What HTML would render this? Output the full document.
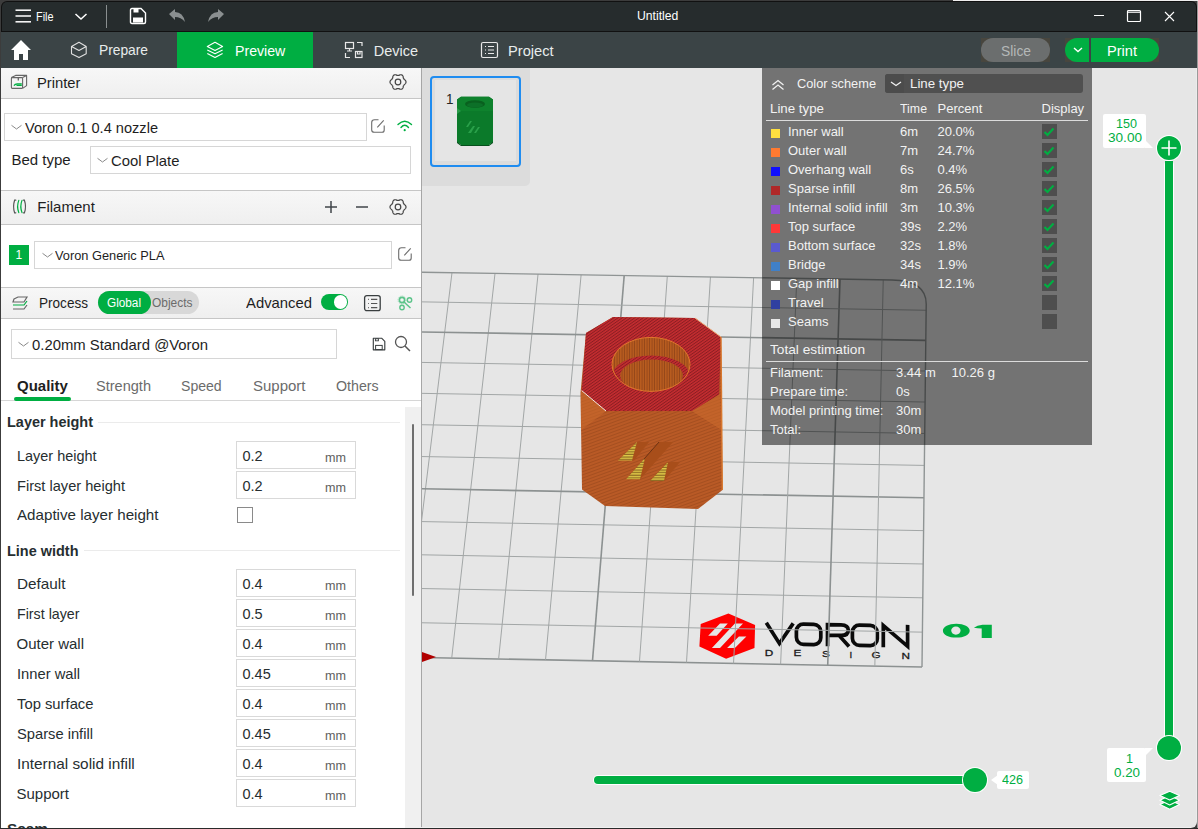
<!DOCTYPE html><html><head><meta charset="utf-8"><style>
html,body{margin:0;padding:0;width:1198px;height:829px;overflow:hidden;background:#3a3a3a}
body>div,body>svg{position:absolute}
.t{position:absolute;line-height:0;white-space:nowrap;font-family:"Liberation Sans",sans-serif}
</style></head><body>
<div style="left:0px;top:0px;width:1198px;height:829px;background:#3c3c3c"></div>
<div style="left:953px;top:0px;width:245px;height:1px;background:#eeeeee"></div>
<div style="left:1197px;top:1px;width:1px;height:828px;background:#9a9a9a"></div>
<div style="left:0px;top:828px;width:1198px;height:1px;background:#2a2a2a"></div>
<div style="left:1px;top:1px;width:1196px;height:827px;background:#111;border-radius:6px"></div>
<div style="left:2px;top:2px;width:1194px;height:29px;background:#262c2d;border-radius:5px 5px 0 0"></div>
<svg style="position:absolute;left:15px;top:9px;" width="17" height="14" viewBox="0 0 17 14"><g stroke="#f4f4f4" stroke-width="1.6"><line x1="0.5" y1="1.2" x2="16" y2="1.2"/><line x1="0.5" y1="7" x2="16" y2="7"/><line x1="0.5" y1="12.8" x2="16" y2="12.8"/></g></svg>
<div class="t" style="left:35.5px;top:16.50px;font-size:13px;color:#fff;transform:scaleX(0.8355);transform-origin:0 0;">File</div>
<svg style="position:absolute;left:74px;top:13px;" width="14" height="8" viewBox="0 0 14 8"><polyline points="1.5,1 7,6 12.5,1" fill="none" stroke="#fff" stroke-width="1.5"/></svg>
<div style="left:106px;top:5px;width:1px;height:23px;background:#8a8f90"></div>
<svg style="position:absolute;left:129px;top:7px;" width="18" height="18" viewBox="0 0 18 18"><path d="M2.5,1.5 H12 L16.5,6 V15 Q16.5,16.5 15,16.5 H3 Q1.5,16.5 1.5,15 V3 Q1.5,1.5 3,1.5 Z" fill="none" stroke="#fff" stroke-width="1.4"/><rect x="4.5" y="2" width="5" height="3.5" fill="#fff"/><rect x="4" y="10.5" width="10" height="5" fill="#fff"/></svg>
<svg style="position:absolute;left:168px;top:9px;" width="18" height="14" viewBox="0 0 18 14"><path d="M1,5 L7,0 V3 Q15,3 17,13 Q13,8 7,8 V11 Z" fill="#8a8f90"/></svg>
<svg style="position:absolute;left:207px;top:9px;" width="18" height="14" viewBox="0 0 18 14"><path d="M17,5 L11,0 V3 Q3,3 1,13 Q5,8 11,8 V11 Z" fill="#8a8f90"/></svg>
<div class="t" style="left:636.5px;top:16.37px;font-size:12.5px;color:#fff;transform:scaleX(0.9745);transform-origin:0 0;">Untitled</div>
<div style="left:1094px;top:15px;width:10px;height:1px;background:#fff"></div>
<svg style="position:absolute;left:1126px;top:9px;" width="16" height="14" viewBox="0 0 16 14"><rect x="1.5" y="1.5" width="13" height="11" rx="1" fill="none" stroke="#fff" stroke-width="1.2"/><line x1="1.5" y1="3.2" x2="14.5" y2="3.2" stroke="#fff" stroke-width="1.2"/></svg>
<svg style="position:absolute;left:1164px;top:11px;" width="12" height="12" viewBox="0 0 12 12"><path d="M1,1 L10,10 M10,1 L1,10" stroke="#fff" stroke-width="1.1"/></svg>
<div style="left:1px;top:32px;width:1196px;height:36px;background:#3b4446"></div>
<div style="left:177px;top:32px;width:136px;height:36px;background:#00ae42"></div>
<svg style="position:absolute;left:10px;top:39px;" width="22" height="22" viewBox="0 0 22 22"><path d="M11,1 L21,11 H18 V21 H13 V15 H9 V21 H4 V11 H1 Z" fill="#fff"/></svg>
<svg style="position:absolute;left:70px;top:41px;" width="18" height="18" viewBox="0 0 18 18"><path d="M9,1.3 L16.2,5.5 V12.7 L9,16.6 L1.5,12.7 V5.5 Z M1.5,5.5 L9,9.5 L16.2,5.5" fill="none" stroke="#e0e0e0" stroke-width="1.1" stroke-linejoin="round"/></svg>
<div class="t" style="left:99px;top:50.48px;font-size:14.5px;color:#e8ecec;transform:scaleX(0.9500);transform-origin:0 0;">Prepare</div>
<svg style="position:absolute;left:206px;top:41px;" width="18" height="18" viewBox="0 0 18 18"><g fill="none" stroke="#fff" stroke-width="1.1" stroke-linejoin="round"><path d="M9,1.3 L16.6,5.5 L9,9.5 L1.3,5.5 Z"/><path d="M1.3,9 L9,12.8 L16.6,9"/><path d="M1.3,12.5 L9,16.5 L16.6,12.5"/></g></svg>
<div class="t" style="left:234.5px;top:50.98px;font-size:14.5px;color:#fff;transform:scaleX(0.9754);transform-origin:0 0;">Preview</div>
<svg style="position:absolute;left:344px;top:41px;" width="20" height="18" viewBox="0 0 20 18"><g fill="none" stroke="#e8e8e8" stroke-width="1.2"><rect x="1.5" y="1.5" width="8" height="6"/><path d="M5.5,7.5 V10 M3,10 H8"/><path d="M13,1.5 H18 V5"/><path d="M1.5,12 V16.5 H6"/><rect x="11.5" y="10.5" width="6.5" height="6"/><path d="M13.5,10.5 V13 H16 V10.5"/></g></svg>
<div class="t" style="left:373.7px;top:50.98px;font-size:14.5px;color:#e8ecec;">Device</div>
<svg style="position:absolute;left:480px;top:41px;" width="19" height="18" viewBox="0 0 19 18"><g fill="none" stroke="#e8e8e8" stroke-width="1.2"><rect x="1.5" y="1.5" width="16" height="15" rx="1.5"/><path d="M5,5.5 H6 M5,9 H6 M5,12.5 H6 M8,5.5 H14 M8,9 H14 M8,12.5 H14"/></g></svg>
<div class="t" style="left:508.4px;top:50.98px;font-size:14.5px;color:#e8ecec;transform:scaleX(1.0105);transform-origin:0 0;">Project</div>
<div style="left:981px;top:38px;width:69px;height:24px;background:#48463e"></div>
<div style="left:981px;top:38px;width:69px;height:24px;background:#6b6e6e;border-radius:12px"></div>
<div class="t" style="left:1000.5px;top:51.15px;font-size:14px;color:#b4b8b8;transform:scaleX(0.9886);transform-origin:0 0;">Slice</div>
<div style="left:1065px;top:38px;width:94px;height:24px;background:#48463e"></div>
<div style="left:1065px;top:38px;width:94px;height:24px;background:#00ae42;border-radius:12px"></div>
<div style="left:1089px;top:38px;width:2px;height:24px;background:#3b4446"></div>
<svg style="position:absolute;left:1072px;top:46px;" width="12" height="8" viewBox="0 0 12 8"><polyline points="2,2 6,5.5 10,2" fill="none" stroke="#fff" stroke-width="1.4"/></svg>
<div class="t" style="left:1107px;top:51.15px;font-size:14px;color:#fff;transform:scaleX(1.0422);transform-origin:0 0;">Print</div>
<div style="left:1px;top:68px;width:420px;height:760px;background:#fff"></div>
<div style="left:421px;top:68px;width:1px;height:760px;background:#a6a6a6"></div>
<div style="left:1px;top:68px;width:420px;height:30px;background:linear-gradient(#f7f7f7,#efefef)"></div>
<div style="left:1px;top:98px;width:420px;height:1px;background:#c6c6c6"></div>
<svg style="position:absolute;left:10px;top:73px;" width="19" height="18" viewBox="0 0 19 18"><g fill="none" stroke="#666" stroke-width="1.1" stroke-linejoin="round"><rect x="1.4" y="4.6" width="11.2" height="10.8" rx="0.8"/><path d="M1.4,4.6 L5.6,2.4 H16.6 V12.6 L12.6,15.4 M12.6,4.6 L16.6,2.4"/><path d="M8.3,4.6 V7.6" stroke-width="1.3"/></g><path d="M4,12.6 Q5,11 7.2,10.9 H11.8 M6.5,12.4 H11.8" fill="none" stroke="#00ae42" stroke-width="1.3"/></svg>
<div class="t" style="left:37px;top:82.80px;font-size:15px;color:#1e1e1e;transform:scaleX(0.9847);transform-origin:0 0;">Printer</div>
<svg style="position:absolute;left:388px;top:72px" width="20" height="20" viewBox="388 72 20 20"><path d="M406.00,82.00 L405.96,82.42 L405.85,82.83 L405.68,83.22 L405.43,83.58 L405.12,83.91 L404.73,84.19 L404.25,84.40 L404.12,84.73 L403.97,85.04 L403.80,85.35 L403.62,85.65 L403.42,85.94 L403.21,86.22 L403.26,86.74 L403.21,87.21 L403.08,87.65 L402.89,88.04 L402.64,88.39 L402.34,88.69 L402.00,88.93 L401.62,89.11 L401.21,89.22 L400.79,89.26 L400.35,89.23 L399.91,89.12 L399.47,88.92 L399.05,88.62 L398.70,88.66 L398.35,88.69 L398.00,88.70 L397.65,88.69 L397.30,88.66 L396.95,88.62 L396.53,88.92 L396.09,89.12 L395.65,89.23 L395.21,89.26 L394.79,89.22 L394.38,89.11 L394.00,88.93 L393.66,88.69 L393.36,88.39 L393.11,88.04 L392.92,87.65 L392.79,87.21 L392.74,86.74 L392.79,86.22 L392.58,85.94 L392.38,85.65 L392.20,85.35 L392.03,85.04 L391.88,84.73 L391.75,84.40 L391.27,84.19 L390.88,83.91 L390.57,83.58 L390.32,83.22 L390.15,82.83 L390.04,82.42 L390.00,82.00 L390.04,81.58 L390.15,81.17 L390.32,80.78 L390.57,80.42 L390.88,80.09 L391.27,79.81 L391.75,79.60 L391.88,79.27 L392.03,78.96 L392.20,78.65 L392.38,78.35 L392.58,78.06 L392.79,77.78 L392.74,77.26 L392.79,76.79 L392.92,76.35 L393.11,75.96 L393.36,75.61 L393.66,75.31 L394.00,75.07 L394.38,74.89 L394.79,74.78 L395.21,74.74 L395.65,74.77 L396.09,74.88 L396.53,75.08 L396.95,75.38 L397.30,75.34 L397.65,75.31 L398.00,75.30 L398.35,75.31 L398.70,75.34 L399.05,75.38 L399.47,75.08 L399.91,74.88 L400.35,74.77 L400.79,74.74 L401.21,74.78 L401.62,74.89 L402.00,75.07 L402.34,75.31 L402.64,75.61 L402.89,75.96 L403.08,76.35 L403.21,76.79 L403.26,77.26 L403.21,77.78 L403.42,78.06 L403.62,78.35 L403.80,78.65 L403.97,78.96 L404.12,79.27 L404.25,79.60 L404.73,79.81 L405.12,80.09 L405.43,80.42 L405.68,80.78 L405.85,81.17 L405.96,81.58 L406.00,82.00 Z" fill="none" stroke="#444" stroke-width="1.2"/><circle cx="398" cy="82" r="2.8" fill="none" stroke="#444" stroke-width="1.2"/></svg>
<div style="left:4px;top:113px;width:363px;height:28px;border:1px solid #d6d6d6;box-sizing:border-box;background:#fff"></div>
<svg style="position:absolute;left:10px;top:123px;" width="14" height="9" viewBox="0 0 14 9"><polyline points="1.5,2.3 6.5,6 11.5,2.3" fill="none" stroke="#8a8a8a" stroke-width="1"/></svg>
<div class="t" style="left:25.4px;top:127.80px;font-size:15px;color:#1e1e1e;transform:scaleX(0.9725);transform-origin:0 0;">Voron 0.1 0.4 nozzle</div>
<svg style="position:absolute;left:370px;top:118px;" width="16" height="16" viewBox="0 0 16 16"><path d="M8.5,1.7 H4.5 Q1.7,1.7 1.7,4.5 V11.9 Q1.7,14.2 4.5,14.2 H12 Q14.2,14.2 14.2,11.9 V7.5" fill="none" stroke="#6b6b6b" stroke-width="1.1"/><path d="M7.3,9.4 L13.7,2.4" stroke="#6b6b6b" stroke-width="1.1"/></svg>
<svg style="position:absolute;left:396px;top:118px;" width="18" height="16" viewBox="0 0 18 16"><g fill="none" stroke="#00ae42" stroke-width="1.4" stroke-linecap="round"><path d="M2,6.6 Q8.7,-0.2 15.5,6.6"/><path d="M5,9.5 Q8.7,5.1 12.5,9.5"/></g><circle cx="8.7" cy="12.2" r="1.1" fill="#00ae42"/></svg>
<div class="t" style="left:11.4px;top:159.80px;font-size:15px;color:#1e1e1e;">Bed type</div>
<div style="left:90px;top:146px;width:321px;height:28px;border:1px solid #d6d6d6;box-sizing:border-box;background:#fff"></div>
<svg style="position:absolute;left:96px;top:156px;" width="14" height="9" viewBox="0 0 14 9"><polyline points="1.5,2.3 6.5,6 11.5,2.3" fill="none" stroke="#8a8a8a" stroke-width="1"/></svg>
<div class="t" style="left:111.3px;top:160.80px;font-size:15px;color:#1e1e1e;transform:scaleX(0.9898);transform-origin:0 0;">Cool Plate</div>
<div style="left:1px;top:190px;width:420px;height:1px;background:#c6c6c6"></div>
<div style="left:1px;top:191px;width:420px;height:33px;background:linear-gradient(#f7f7f7,#efefef)"></div>
<div style="left:1px;top:224px;width:420px;height:1px;background:#c6c6c6"></div>
<svg style="position:absolute;left:10px;top:198px;" width="20" height="18" viewBox="0 0 20 18"><g fill="none" stroke-width="1.2" stroke-linecap="round"><path d="M5.8,2.2 H4.6 Q2.6,8.5 4.6,14.8 H5.8" stroke="#555"/><path d="M8.8,2.4 Q6.4,8.5 8.8,14.6" stroke="#00ae42"/><path d="M12,2.4 Q9.6,8.5 12,14.6" stroke="#00ae42"/><path d="M13.4,2.2 H14.4 Q16.6,8.5 14.4,14.8 H13.4" stroke="#555"/></g></svg>
<div class="t" style="left:37.3px;top:207.30px;font-size:15px;color:#1e1e1e;">Filament</div>
<svg style="position:absolute;left:322px;top:198px;" width="18" height="18" viewBox="0 0 18 18"><path d="M9,3 V15 M3,9 H15" stroke="#40454a" stroke-width="1.5"/></svg>
<svg style="position:absolute;left:353px;top:198px;" width="18" height="18" viewBox="0 0 18 18"><path d="M3,9 H15" stroke="#40454a" stroke-width="1.5"/></svg>
<svg style="position:absolute;left:388px;top:197px" width="20" height="20" viewBox="388 197 20 20"><path d="M406.00,207.00 L405.96,207.42 L405.85,207.83 L405.68,208.22 L405.43,208.58 L405.12,208.91 L404.73,209.19 L404.25,209.40 L404.12,209.73 L403.97,210.04 L403.80,210.35 L403.62,210.65 L403.42,210.94 L403.21,211.22 L403.26,211.74 L403.21,212.21 L403.08,212.65 L402.89,213.04 L402.64,213.39 L402.34,213.69 L402.00,213.93 L401.62,214.11 L401.21,214.22 L400.79,214.26 L400.35,214.23 L399.91,214.12 L399.47,213.92 L399.05,213.62 L398.70,213.66 L398.35,213.69 L398.00,213.70 L397.65,213.69 L397.30,213.66 L396.95,213.62 L396.53,213.92 L396.09,214.12 L395.65,214.23 L395.21,214.26 L394.79,214.22 L394.38,214.11 L394.00,213.93 L393.66,213.69 L393.36,213.39 L393.11,213.04 L392.92,212.65 L392.79,212.21 L392.74,211.74 L392.79,211.22 L392.58,210.94 L392.38,210.65 L392.20,210.35 L392.03,210.04 L391.88,209.73 L391.75,209.40 L391.27,209.19 L390.88,208.91 L390.57,208.58 L390.32,208.22 L390.15,207.83 L390.04,207.42 L390.00,207.00 L390.04,206.58 L390.15,206.17 L390.32,205.78 L390.57,205.42 L390.88,205.09 L391.27,204.81 L391.75,204.60 L391.88,204.27 L392.03,203.96 L392.20,203.65 L392.38,203.35 L392.58,203.06 L392.79,202.78 L392.74,202.26 L392.79,201.79 L392.92,201.35 L393.11,200.96 L393.36,200.61 L393.66,200.31 L394.00,200.07 L394.38,199.89 L394.79,199.78 L395.21,199.74 L395.65,199.77 L396.09,199.88 L396.53,200.08 L396.95,200.38 L397.30,200.34 L397.65,200.31 L398.00,200.30 L398.35,200.31 L398.70,200.34 L399.05,200.38 L399.47,200.08 L399.91,199.88 L400.35,199.77 L400.79,199.74 L401.21,199.78 L401.62,199.89 L402.00,200.07 L402.34,200.31 L402.64,200.61 L402.89,200.96 L403.08,201.35 L403.21,201.79 L403.26,202.26 L403.21,202.78 L403.42,203.06 L403.62,203.35 L403.80,203.65 L403.97,203.96 L404.12,204.27 L404.25,204.60 L404.73,204.81 L405.12,205.09 L405.43,205.42 L405.68,205.78 L405.85,206.17 L405.96,206.58 L406.00,207.00 Z" fill="none" stroke="#444" stroke-width="1.2"/><circle cx="398" cy="207" r="2.8" fill="none" stroke="#444" stroke-width="1.2"/></svg>
<div style="left:9px;top:245px;width:20px;height:20px;background:#00ae42"></div>
<div class="t" style="left:15.5px;top:255.34px;font-size:12px;color:#fff;">1</div>
<div style="left:34px;top:241px;width:358px;height:28px;border:1px solid #d6d6d6;box-sizing:border-box;background:#fff"></div>
<svg style="position:absolute;left:41px;top:251px;" width="14" height="9" viewBox="0 0 14 9"><polyline points="1.5,2.3 6.5,6 11.5,2.3" fill="none" stroke="#8a8a8a" stroke-width="1"/></svg>
<div class="t" style="left:55.2px;top:256.17px;font-size:12.5px;color:#1e1e1e;transform:scaleX(1.0233);transform-origin:0 0;">Voron Generic PLA</div>
<svg style="position:absolute;left:397px;top:246px;" width="16" height="16" viewBox="0 0 16 16"><path d="M8.5,1.7 H4.5 Q1.7,1.7 1.7,4.5 V11.9 Q1.7,14.2 4.5,14.2 H12 Q14.2,14.2 14.2,11.9 V7.5" fill="none" stroke="#6b6b6b" stroke-width="1.1"/><path d="M7.3,9.4 L13.7,2.4" stroke="#6b6b6b" stroke-width="1.1"/></svg>
<div style="left:1px;top:287px;width:420px;height:1px;background:#c6c6c6"></div>
<div style="left:1px;top:288px;width:420px;height:30px;background:linear-gradient(#f7f7f7,#efefef)"></div>
<div style="left:1px;top:318px;width:420px;height:1px;background:#c6c6c6"></div>
<svg style="position:absolute;left:11px;top:295.5px;" width="18" height="16" viewBox="0 0 18 16"><g fill="none" stroke-width="1.2"><path d="M3,3 L7,1 H16 L13,6 H2 Z" stroke="#666"/><path d="M2,9 H13 L16,5" stroke="#00ae42"/><path d="M2,13 H13 L16,9" stroke="#666"/></g></svg>
<div class="t" style="left:39.4px;top:302.80px;font-size:15px;color:#1e1e1e;transform:scaleX(0.9043);transform-origin:0 0;">Process</div>
<div style="left:98px;top:291px;width:101px;height:23px;background:#d8d8d8;border-radius:11.5px"></div>
<div style="left:98px;top:291px;width:53px;height:23px;background:#00ae42;border-radius:11.5px"></div>
<div class="t" style="left:107px;top:302.67px;font-size:12.5px;color:#fff;transform:scaleX(0.9410);transform-origin:0 0;">Global</div>
<div class="t" style="left:152px;top:302.67px;font-size:12.5px;color:#6b6b6b;transform:scaleX(0.9558);transform-origin:0 0;">Objects</div>
<div class="t" style="left:246px;top:302.80px;font-size:15px;color:#1e1e1e;transform:scaleX(0.9893);transform-origin:0 0;">Advanced</div>
<div style="left:321px;top:294.2px;width:27px;height:15.6px;background:#00ae42;border-radius:8px"></div>
<div style="left:334px;top:295.3px;width:13.4px;height:13.4px;border-radius:7px;background:#fff"></div>
<svg style="position:absolute;left:363px;top:294px;" width="19" height="18" viewBox="0 0 19 18"><rect x="1.6" y="1.6" width="15.6" height="15" rx="2.2" fill="none" stroke="#3a3f40" stroke-width="1.3"/><path d="M5,5.4 H5.8 M5,9.5 H5.8 M5,13.6 H5.8 M8,5.4 H14.3 M8,9.5 H14.3 M8,13.6 H14.3" stroke="#555" stroke-width="1.2"/></svg>
<svg style="position:absolute;left:396px;top:293px;" width="18" height="18" viewBox="0 0 18 18"><g fill="none" stroke="#5cc48a"><circle cx="6" cy="7" r="2.6" stroke-width="1.6"/><circle cx="6" cy="7" r="4" stroke-width="0.6" stroke-dasharray="1,1"/><circle cx="13.5" cy="7" r="2.2" stroke-width="1.4"/><circle cx="6" cy="14.5" r="2.2" stroke-width="1.4"/><path d="M8,9 L14.5,15" stroke-width="1.5"/></g></svg>
<div style="left:11px;top:329px;width:326px;height:30px;border:1px solid #d6d6d6;box-sizing:border-box;background:#fff"></div>
<svg style="position:absolute;left:17px;top:340px;" width="14" height="9" viewBox="0 0 14 9"><polyline points="1.5,2.3 6.5,6 11.5,2.3" fill="none" stroke="#8a8a8a" stroke-width="1"/></svg>
<div class="t" style="left:32px;top:345.30px;font-size:15px;color:#1e1e1e;transform:scaleX(0.9898);transform-origin:0 0;">0.20mm Standard @Voron</div>
<svg style="position:absolute;left:372px;top:337px;" width="15" height="15" viewBox="0 0 15 15"><path d="M1.3,1.2 H9.6 L12.8,4.4 V12.8 H1.3 Z" fill="none" stroke="#3a3f40" stroke-width="1.15" stroke-linejoin="round"/><rect x="3.4" y="1.8" width="3" height="2" fill="none" stroke="#3a3f40" stroke-width="0.9"/><rect x="3.6" y="8.4" width="6.6" height="4.2" fill="none" stroke="#3a3f40" stroke-width="1"/></svg>
<svg style="position:absolute;left:394px;top:335px;" width="18" height="18" viewBox="0 0 18 18"><circle cx="7" cy="7" r="5.5" fill="none" stroke="#555" stroke-width="1.3"/><path d="M11,11 L16,16" stroke="#555" stroke-width="1.5"/></svg>
<div class="t" style="left:17px;top:385.80px;font-size:15px;color:#1e1e1e;font-weight:bold;">Quality</div>
<div class="t" style="left:96.4px;top:385.80px;font-size:15px;color:#6b6b6b;transform:scaleX(0.9700);transform-origin:0 0;">Strength</div>
<div style="left:1px;top:400px;width:420px;height:1px;background:#d6d6d6"></div>
<div style="left:14px;top:397px;width:57px;height:4px;background:#00ae42;border-radius:2px"></div>
<div class="t" style="left:181.2px;top:385.80px;font-size:15px;color:#6b6b6b;transform:scaleX(0.9384);transform-origin:0 0;">Speed</div>
<div class="t" style="left:253px;top:385.80px;font-size:15px;color:#6b6b6b;">Support</div>
<div class="t" style="left:335.8px;top:385.80px;font-size:15px;color:#6b6b6b;transform:scaleX(0.9486);transform-origin:0 0;">Others</div>
<div style="left:405px;top:407px;width:16px;height:421px;background:#f0f0f0"></div>
<div style="left:412px;top:424px;width:2px;height:172px;background:#6f6f6f;border-radius:1px"></div>
<div class="t" style="left:7px;top:422.00px;font-size:15px;color:#262e30;font-weight:bold;transform:scaleX(0.9643);transform-origin:0 0;">Layer height</div>
<div style="left:98px;top:422px;width:302px;height:1px;background:#ebebeb"></div>
<div class="t" style="left:16.5px;top:455.50px;font-size:15px;color:#262e30;transform:scaleX(0.9630);transform-origin:0 0;">Layer height</div>
<div style="left:236px;top:441px;width:120px;height:28px;border:1px solid #d9d9d9;box-sizing:border-box;background:#fff"></div>
<div class="t" style="left:242.5px;top:455.68px;font-size:14.5px;color:#262e30;">0.2</div>
<div class="t" style="left:324.6px;top:458.04px;font-size:12px;color:#5e5e5e;transform:scaleX(1.0505);transform-origin:0 0;">mm</div>
<div class="t" style="left:16.5px;top:485.50px;font-size:15px;color:#262e30;transform:scaleX(0.9741);transform-origin:0 0;">First layer height</div>
<div style="left:236px;top:471px;width:120px;height:28px;border:1px solid #d9d9d9;box-sizing:border-box;background:#fff"></div>
<div class="t" style="left:242.5px;top:485.68px;font-size:14.5px;color:#262e30;">0.2</div>
<div class="t" style="left:324.6px;top:488.04px;font-size:12px;color:#5e5e5e;transform:scaleX(1.0505);transform-origin:0 0;">mm</div>
<div class="t" style="left:16.5px;top:515.30px;font-size:15px;color:#262e30;transform:scaleX(1.0101);transform-origin:0 0;">Adaptive layer height</div>
<div style="left:237px;top:507px;width:16px;height:16px;border:1px solid #8a8a8a;box-sizing:border-box;background:#fff"></div>
<div class="t" style="left:7px;top:550.80px;font-size:15px;color:#262e30;font-weight:bold;transform:scaleX(0.9642);transform-origin:0 0;">Line width</div>
<div style="left:84px;top:550px;width:316px;height:1px;background:#ebebeb"></div>
<div class="t" style="left:16.5px;top:583.80px;font-size:15px;color:#262e30;transform:scaleX(1.0205);transform-origin:0 0;">Default</div>
<div style="left:236px;top:569px;width:120px;height:28px;border:1px solid #d9d9d9;box-sizing:border-box;background:#fff"></div>
<div class="t" style="left:242.5px;top:583.98px;font-size:14.5px;color:#262e30;">0.4</div>
<div class="t" style="left:324.6px;top:586.34px;font-size:12px;color:#5e5e5e;transform:scaleX(1.0505);transform-origin:0 0;">mm</div>
<div class="t" style="left:16.5px;top:613.80px;font-size:15px;color:#262e30;transform:scaleX(0.9494);transform-origin:0 0;">First layer</div>
<div style="left:236px;top:599px;width:120px;height:28px;border:1px solid #d9d9d9;box-sizing:border-box;background:#fff"></div>
<div class="t" style="left:242.5px;top:613.98px;font-size:14.5px;color:#262e30;">0.5</div>
<div class="t" style="left:324.6px;top:616.34px;font-size:12px;color:#5e5e5e;transform:scaleX(1.0505);transform-origin:0 0;">mm</div>
<div class="t" style="left:16.5px;top:643.80px;font-size:15px;color:#262e30;">Outer wall</div>
<div style="left:236px;top:629px;width:120px;height:28px;border:1px solid #d9d9d9;box-sizing:border-box;background:#fff"></div>
<div class="t" style="left:242.5px;top:643.98px;font-size:14.5px;color:#262e30;">0.4</div>
<div class="t" style="left:324.6px;top:646.34px;font-size:12px;color:#5e5e5e;transform:scaleX(1.0505);transform-origin:0 0;">mm</div>
<div class="t" style="left:16.5px;top:673.80px;font-size:15px;color:#262e30;transform:scaleX(0.9814);transform-origin:0 0;">Inner wall</div>
<div style="left:236px;top:659px;width:120px;height:28px;border:1px solid #d9d9d9;box-sizing:border-box;background:#fff"></div>
<div class="t" style="left:242.5px;top:673.98px;font-size:14.5px;color:#262e30;">0.45</div>
<div class="t" style="left:324.6px;top:676.34px;font-size:12px;color:#5e5e5e;transform:scaleX(1.0505);transform-origin:0 0;">mm</div>
<div class="t" style="left:16.5px;top:703.80px;font-size:15px;color:#262e30;transform:scaleX(0.9866);transform-origin:0 0;">Top surface</div>
<div style="left:236px;top:689px;width:120px;height:28px;border:1px solid #d9d9d9;box-sizing:border-box;background:#fff"></div>
<div class="t" style="left:242.5px;top:703.98px;font-size:14.5px;color:#262e30;">0.4</div>
<div class="t" style="left:324.6px;top:706.34px;font-size:12px;color:#5e5e5e;transform:scaleX(1.0505);transform-origin:0 0;">mm</div>
<div class="t" style="left:16.5px;top:733.80px;font-size:15px;color:#262e30;transform:scaleX(0.9802);transform-origin:0 0;">Sparse infill</div>
<div style="left:236px;top:719px;width:120px;height:28px;border:1px solid #d9d9d9;box-sizing:border-box;background:#fff"></div>
<div class="t" style="left:242.5px;top:733.98px;font-size:14.5px;color:#262e30;">0.45</div>
<div class="t" style="left:324.6px;top:736.34px;font-size:12px;color:#5e5e5e;transform:scaleX(1.0505);transform-origin:0 0;">mm</div>
<div class="t" style="left:16.5px;top:763.80px;font-size:15px;color:#262e30;transform:scaleX(1.0230);transform-origin:0 0;">Internal solid infill</div>
<div style="left:236px;top:749px;width:120px;height:28px;border:1px solid #d9d9d9;box-sizing:border-box;background:#fff"></div>
<div class="t" style="left:242.5px;top:763.98px;font-size:14.5px;color:#262e30;">0.4</div>
<div class="t" style="left:324.6px;top:766.34px;font-size:12px;color:#5e5e5e;transform:scaleX(1.0505);transform-origin:0 0;">mm</div>
<div class="t" style="left:16.5px;top:793.80px;font-size:15px;color:#262e30;">Support</div>
<div style="left:236px;top:779px;width:120px;height:28px;border:1px solid #d9d9d9;box-sizing:border-box;background:#fff"></div>
<div class="t" style="left:242.5px;top:793.98px;font-size:14.5px;color:#262e30;">0.4</div>
<div class="t" style="left:324.6px;top:796.34px;font-size:12px;color:#5e5e5e;transform:scaleX(1.0505);transform-origin:0 0;">mm</div>
<div class="t" style="left:7px;top:828.80px;font-size:15px;color:#262e30;font-weight:bold;transform:scaleX(1.0243);transform-origin:0 0;">Seam</div>
<div style="left:422px;top:68px;width:775px;height:760px;background:#e6e6e6;border-radius:0 0 6px 0"></div>
<div style="left:1196px;top:68px;width:1px;height:752px;background:#ececec"></div>
<div style="left:421px;top:827px;width:770px;height:1px;background:#f0f0f0"></div>
<svg style="position:absolute;left:0;top:0" width="1198" height="829" viewBox="0 0 1198 829"><path fill-rule="evenodd" fill="#ff0000" d="M728.4,613.4 L755.1,624.9 L754.5,647.9 L726.1,658.7 L699.4,646.5 L700.7,623.9 Z M720,623.5 L727.8,623.5 L716.6,635.7 L708.2,635.7 Z M734.9,623.5 L743,623.5 L720,647.9 L711.9,647.9 Z M738.9,636.4 L746.4,636.4 L734.9,647.9 L727.1,647.9 Z"/><g transform="matrix(1,0.0186,0,1,0,-14.23)" fill="none" stroke="#0a0a0a" stroke-width="3.7"><path d="M766.3,622.8 L779.4,643.2 L793.2,622.8" stroke-linejoin="miter"/><rect x="796.4" y="623.4" width="24.4" height="20.3" rx="7"/><path d="M827.5,645 V623.4 H841 Q848.3,623.4 848.3,628.6 Q848.3,634 841,634 H827.5 M839,634 L849,645"/><rect x="852.4" y="623.4" width="24.9" height="20.3" rx="7"/><path d="M883.3,645 V623.4 L907.6,643.7 V622.2"/></g><g font-family="Liberation Sans" font-size="9.8" fill="#1a1a1a" stroke="#1a1a1a" stroke-width="0.3"><text x="764.7" y="656" transform="translate(764.7,656) scale(1.2,1) translate(-764.7,-656)">D</text><text x="793.4" y="656.5" transform="translate(793.4,0) scale(1.2,1) translate(-793.4,0)">E</text><text x="822" y="657" transform="translate(822,0) scale(1.2,1) translate(-822,0)">S</text><text x="849.5" y="657.5">I</text><text x="871.5" y="658" transform="translate(871.5,0) scale(1.2,1) translate(-871.5,0)">G</text><text x="901.5" y="659" transform="translate(901.5,0) scale(1.2,1) translate(-901.5,0)">N</text></g><path fill-rule="evenodd" fill="#00ae42" d="M956.3,623.7 C964,623.7 969.7,626.8 969.7,630.65 C969.7,634.5 964,637.6 956.3,637.6 C948.6,637.6 942.9,634.5 942.9,630.65 C942.9,626.8 948.6,623.7 956.3,623.7 Z M955.9,626.4 C953.3,626.4 951.2,628.3 951.2,630.55 C951.2,632.8 953.3,634.7 955.9,634.7 C958.5,634.7 960.6,632.8 960.6,630.55 C960.6,628.3 958.5,626.4 955.9,626.4 Z"/><path fill="#00ae42" d="M973.9,627.8 Q977,625.2 982.5,624.8 H991.8 V637.9 H981.7 V628.6 Q977.5,628.6 973.9,627.8 Z"/></svg>
<svg style="position:absolute;left:422px;top:68px" width="775" height="760" viewBox="0 0 775 760"><line x1="-64.00" y1="588.30" x2="-13.00" y2="204.00" stroke="#8c9191" stroke-width="1.6"/><line x1="-64.00" y1="588.30" x2="500.00" y2="599.00" stroke="#8c9191" stroke-width="1.6"/><line x1="-17.16" y1="589.19" x2="29.99" y2="204.71" stroke="#a2a6a6" stroke-width="1.0"/><line x1="-59.40" y1="553.66" x2="500.41" y2="564.15" stroke="#a2a6a6" stroke-width="1.0"/><line x1="29.71" y1="590.08" x2="73.00" y2="205.41" stroke="#a2a6a6" stroke-width="1.0"/><line x1="-54.87" y1="519.52" x2="500.81" y2="529.81" stroke="#a2a6a6" stroke-width="1.0"/><line x1="76.61" y1="590.97" x2="116.04" y2="206.12" stroke="#a2a6a6" stroke-width="1.0"/><line x1="-50.41" y1="485.89" x2="501.20" y2="495.98" stroke="#a2a6a6" stroke-width="1.0"/><line x1="123.53" y1="591.86" x2="159.11" y2="206.83" stroke="#a2a6a6" stroke-width="1.0"/><line x1="-46.01" y1="452.75" x2="501.59" y2="462.64" stroke="#a2a6a6" stroke-width="1.0"/><line x1="170.49" y1="592.75" x2="202.20" y2="207.53" stroke="#8c9191" stroke-width="1.6"/><line x1="-41.68" y1="420.08" x2="501.97" y2="429.79" stroke="#8c9191" stroke-width="1.6"/><line x1="217.48" y1="593.64" x2="245.31" y2="208.24" stroke="#a2a6a6" stroke-width="1.0"/><line x1="-37.40" y1="387.89" x2="502.35" y2="397.41" stroke="#a2a6a6" stroke-width="1.0"/><line x1="264.49" y1="594.53" x2="288.45" y2="208.95" stroke="#a2a6a6" stroke-width="1.0"/><line x1="-33.19" y1="356.15" x2="502.72" y2="365.49" stroke="#a2a6a6" stroke-width="1.0"/><line x1="311.53" y1="595.42" x2="331.61" y2="209.66" stroke="#a2a6a6" stroke-width="1.0"/><line x1="-29.04" y1="324.86" x2="503.09" y2="334.02" stroke="#a2a6a6" stroke-width="1.0"/><line x1="358.61" y1="596.32" x2="374.79" y2="210.37" stroke="#a2a6a6" stroke-width="1.0"/><line x1="-24.94" y1="294.01" x2="503.45" y2="303.00" stroke="#a2a6a6" stroke-width="1.0"/><line x1="405.71" y1="597.21" x2="418.00" y2="211.08" stroke="#8c9191" stroke-width="1.6"/><line x1="-20.91" y1="263.59" x2="503.80" y2="272.41" stroke="#8c9191" stroke-width="1.6"/><line x1="452.84" y1="598.11" x2="461.24" y2="211.79" stroke="#a2a6a6" stroke-width="1.0"/><line x1="-16.93" y1="233.59" x2="504.15" y2="242.25" stroke="#a2a6a6" stroke-width="1.0"/><path d="M-13.00,204.00 L469.89,211.93 Q504.50,212.50 504.22,236.27 L500.00,599.00" fill="none" stroke="#8f9494" stroke-width="1.4"/><polygon points="0,584 14,589 0,594" fill="#b00000"/></svg>
<svg style="position:absolute;left:0;top:0" width="1198" height="829" viewBox="0 0 1198 829"><defs><pattern id="rs" width="2.4" height="2.4" patternUnits="userSpaceOnUse" patternTransform="rotate(-35)"><rect width="3" height="3" fill="#c42c30"/><rect width="3" height="0.9" fill="#8a1e22"/></pattern><pattern id="os" width="3" height="3" patternUnits="userSpaceOnUse" patternTransform="rotate(-20)"><rect width="3" height="3" fill="#b95a26"/><rect width="3" height="0.8" fill="#a04c1e"/></pattern><pattern id="os2" width="2.5" height="2.5" patternUnits="userSpaceOnUse" patternTransform="rotate(90)"><rect width="3" height="3" fill="#b85c1f"/><rect width="3" height="0.9" fill="#93461a"/></pattern><pattern id="ys" width="4" height="2.6" patternUnits="userSpaceOnUse"><rect width="4" height="2.6" fill="#8c6a22"/><rect width="4" height="1.4" fill="#e0c848"/></pattern><clipPath id="hole"><ellipse cx="651" cy="364.4" rx="39" ry="27"/></clipPath></defs><polygon points="586,333 613,317 695,318 721,337 722.5,490 698,509 605,506 582,489.5 580.5,393" fill="url(#os)"/><polygon points="581,391 606.5,411 581,430" fill="#cc6c2e" opacity="0.55"/><polygon points="720,394 692,411 721.5,430" fill="#cc6c2e" opacity="0.55"/><polygon points="586,333 613,317 695,318 721,337 719,394.5 692,411 606,411 581.7,390.6" fill="url(#rs)"/><line x1="581.7" y1="390.6" x2="606" y2="411" stroke="#f4e8e0" stroke-width="1"/><line x1="695" y1="318" x2="721" y2="337" stroke="#f0b080" stroke-width="1"/><line x1="721" y1="337" x2="722.3" y2="490" stroke="#d8782e" stroke-width="1.4"/><g clip-path="url(#hole)"><rect x="610" y="335" width="82" height="60" fill="url(#os2)"/><ellipse cx="651" cy="376" rx="39" ry="20.5" fill="url(#rs)"/><ellipse cx="651.6" cy="375.6" rx="31.4" ry="16.2" fill="url(#os2)"/></g><ellipse cx="651" cy="364.4" rx="39" ry="27" fill="none" stroke="#e0782c" stroke-width="1"/><g fill="#a84e1a"><polygon points="637,442 649,442 634,460.5 618,460.5"/><polygon points="659,442 673,442 640,479.3 626,479.3"/><polygon points="667,462 680,462 664,481 650,481"/></g><g fill="url(#ys)"><polygon points="637,442 618,460.5 632,460.5"/><polygon points="645,458 626,479.3 640,479.3"/><polygon points="668,462 650,481 664,481"/></g><line x1="659" y1="442" x2="644" y2="459" stroke="#5a2a10" stroke-width="0.8"/></svg>
<div style="left:422px;top:68px;width:108px;height:118px;background:#dcdcdc;border-radius:0 0 5px 0"></div>
<div style="left:430px;top:76px;width:91px;height:91px;border:2px solid #1f8cf0;border-radius:4px;box-sizing:border-box;background:#dcdcdc"></div>
<div style="left:435px;top:80px;width:81px;height:81px;background:#e5e5e5"></div>
<div class="t" style="left:446px;top:98.65px;font-size:14px;color:#262626;transform:scaleX(0.9634);transform-origin:0 0;">1</div>
<svg style="position:absolute;left:450px;top:92px" width="50" height="58" viewBox="450 92 50 58"><polygon points="457,99.5 461,96.7 489,96.7 493,99.5 493,142 489,145 461,145 457,142" fill="#0b7a2a"/><polygon points="457,99.5 461,96.7 489,96.7 493,99.5 493,111 457,111" fill="#0e822d"/><polygon points="457,108 461,111 457,114" fill="#2a9a48"/><polygon points="457,141.5 461,145 489,145 493,141.5 493,143 489,146 461,146 457,143" fill="#06501c"/><ellipse cx="475" cy="104" rx="10" ry="3.8" fill="#09601f"/><ellipse cx="475" cy="105" rx="8" ry="2.4" fill="#0c7028"/><g fill="#2aa04a"><polygon points="470,121 472,121 468,127 466,127"/><polygon points="473,126 475,126 471,133 468,133"/><polygon points="478,127 480,127 476,133 474,133"/></g></svg>
<div style="left:762px;top:68px;width:330px;height:377px;background:rgba(0,0,0,0.5)"></div>
<svg style="position:absolute;left:771px;top:79px;" width="14" height="12" viewBox="0 0 14 12"><g fill="none" stroke="#f0f0f0" stroke-width="1.3"><polyline points="1.5,6 7,1.5 12.5,6"/><polyline points="1.5,10.5 7,6 12.5,10.5"/></g></svg>
<div class="t" style="left:797px;top:83.50px;font-size:13px;color:#f2f2f2;transform:scaleX(0.9851);transform-origin:0 0;">Color scheme</div>
<div style="left:885px;top:74px;width:198px;height:19px;background:#505050;border-radius:3px"></div>
<div style="left:885px;top:74px;width:19px;height:19px;background:#4c4c4c;border-radius:3px 0 0 3px"></div>
<svg style="position:absolute;left:889px;top:80px;" width="14" height="8" viewBox="0 0 14 8"><polyline points="2,2 7,5.5 12,2" fill="none" stroke="#f0f0f0" stroke-width="1.3"/></svg>
<div class="t" style="left:910px;top:83.50px;font-size:13px;color:#f2f2f2;transform:scaleX(1.0235);transform-origin:0 0;">Line type</div>
<div class="t" style="left:770px;top:108.50px;font-size:13px;color:#f2f2f2;transform:scaleX(1.0235);transform-origin:0 0;">Line type</div>
<div class="t" style="left:900px;top:108.50px;font-size:13px;color:#f2f2f2;transform:scaleX(0.9505);transform-origin:0 0;">Time</div>
<div class="t" style="left:937.5px;top:108.50px;font-size:13px;color:#f2f2f2;">Percent</div>
<div class="t" style="left:1041.5px;top:108.50px;font-size:13px;color:#f2f2f2;">Display</div>
<div style="left:766px;top:120px;width:322px;height:1px;background:#dcdcdc"></div>
<div style="left:771px;top:128.5px;width:9px;height:9px;background:#ffe040"></div>
<div class="t" style="left:788px;top:131.50px;font-size:13px;color:#f2f2f2;">Inner wall</div>
<div class="t" style="left:900px;top:131.50px;font-size:13px;color:#f2f2f2;">6m</div>
<div class="t" style="left:937.5px;top:131.50px;font-size:13px;color:#f2f2f2;">20.0%</div>
<div style="left:1041.5px;top:124px;width:15px;height:15px;background:#4e4e4e"></div>
<svg style="position:absolute;left:1043px;top:126px;" width="12" height="11" viewBox="0 0 12 11"><polyline points="1.5,6 4.5,9 10.5,2.5" fill="none" stroke="#00ae42" stroke-width="2.2"/></svg>
<div style="left:771px;top:147.5px;width:9px;height:9px;background:#ff7a30"></div>
<div class="t" style="left:788px;top:150.50px;font-size:13px;color:#f2f2f2;">Outer wall</div>
<div class="t" style="left:900px;top:150.50px;font-size:13px;color:#f2f2f2;">7m</div>
<div class="t" style="left:937.5px;top:150.50px;font-size:13px;color:#f2f2f2;">24.7%</div>
<div style="left:1041.5px;top:143px;width:15px;height:15px;background:#4e4e4e"></div>
<svg style="position:absolute;left:1043px;top:145px;" width="12" height="11" viewBox="0 0 12 11"><polyline points="1.5,6 4.5,9 10.5,2.5" fill="none" stroke="#00ae42" stroke-width="2.2"/></svg>
<div style="left:771px;top:166.5px;width:9px;height:9px;background:#1010ff"></div>
<div class="t" style="left:788px;top:169.50px;font-size:13px;color:#f2f2f2;">Overhang wall</div>
<div class="t" style="left:900px;top:169.50px;font-size:13px;color:#f2f2f2;">6s</div>
<div class="t" style="left:937.5px;top:169.50px;font-size:13px;color:#f2f2f2;">0.4%</div>
<div style="left:1041.5px;top:162px;width:15px;height:15px;background:#4e4e4e"></div>
<svg style="position:absolute;left:1043px;top:164px;" width="12" height="11" viewBox="0 0 12 11"><polyline points="1.5,6 4.5,9 10.5,2.5" fill="none" stroke="#00ae42" stroke-width="2.2"/></svg>
<div style="left:771px;top:185.5px;width:9px;height:9px;background:#b02828"></div>
<div class="t" style="left:788px;top:188.50px;font-size:13px;color:#f2f2f2;">Sparse infill</div>
<div class="t" style="left:900px;top:188.50px;font-size:13px;color:#f2f2f2;">8m</div>
<div class="t" style="left:937.5px;top:188.50px;font-size:13px;color:#f2f2f2;">26.5%</div>
<div style="left:1041.5px;top:181px;width:15px;height:15px;background:#4e4e4e"></div>
<svg style="position:absolute;left:1043px;top:183px;" width="12" height="11" viewBox="0 0 12 11"><polyline points="1.5,6 4.5,9 10.5,2.5" fill="none" stroke="#00ae42" stroke-width="2.2"/></svg>
<div style="left:771px;top:204.5px;width:9px;height:9px;background:#9050d0"></div>
<div class="t" style="left:788px;top:207.50px;font-size:13px;color:#f2f2f2;">Internal solid infill</div>
<div class="t" style="left:900px;top:207.50px;font-size:13px;color:#f2f2f2;">3m</div>
<div class="t" style="left:937.5px;top:207.50px;font-size:13px;color:#f2f2f2;">10.3%</div>
<div style="left:1041.5px;top:200px;width:15px;height:15px;background:#4e4e4e"></div>
<svg style="position:absolute;left:1043px;top:202px;" width="12" height="11" viewBox="0 0 12 11"><polyline points="1.5,6 4.5,9 10.5,2.5" fill="none" stroke="#00ae42" stroke-width="2.2"/></svg>
<div style="left:771px;top:223.5px;width:9px;height:9px;background:#ff3838"></div>
<div class="t" style="left:788px;top:226.50px;font-size:13px;color:#f2f2f2;">Top surface</div>
<div class="t" style="left:900px;top:226.50px;font-size:13px;color:#f2f2f2;">39s</div>
<div class="t" style="left:937.5px;top:226.50px;font-size:13px;color:#f2f2f2;">2.2%</div>
<div style="left:1041.5px;top:219px;width:15px;height:15px;background:#4e4e4e"></div>
<svg style="position:absolute;left:1043px;top:221px;" width="12" height="11" viewBox="0 0 12 11"><polyline points="1.5,6 4.5,9 10.5,2.5" fill="none" stroke="#00ae42" stroke-width="2.2"/></svg>
<div style="left:771px;top:242.5px;width:9px;height:9px;background:#5a5ad0"></div>
<div class="t" style="left:788px;top:245.50px;font-size:13px;color:#f2f2f2;">Bottom surface</div>
<div class="t" style="left:900px;top:245.50px;font-size:13px;color:#f2f2f2;">32s</div>
<div class="t" style="left:937.5px;top:245.50px;font-size:13px;color:#f2f2f2;">1.8%</div>
<div style="left:1041.5px;top:238px;width:15px;height:15px;background:#4e4e4e"></div>
<svg style="position:absolute;left:1043px;top:240px;" width="12" height="11" viewBox="0 0 12 11"><polyline points="1.5,6 4.5,9 10.5,2.5" fill="none" stroke="#00ae42" stroke-width="2.2"/></svg>
<div style="left:771px;top:261.5px;width:9px;height:9px;background:#4080c8"></div>
<div class="t" style="left:788px;top:264.50px;font-size:13px;color:#f2f2f2;">Bridge</div>
<div class="t" style="left:900px;top:264.50px;font-size:13px;color:#f2f2f2;">34s</div>
<div class="t" style="left:937.5px;top:264.50px;font-size:13px;color:#f2f2f2;">1.9%</div>
<div style="left:1041.5px;top:257px;width:15px;height:15px;background:#4e4e4e"></div>
<svg style="position:absolute;left:1043px;top:259px;" width="12" height="11" viewBox="0 0 12 11"><polyline points="1.5,6 4.5,9 10.5,2.5" fill="none" stroke="#00ae42" stroke-width="2.2"/></svg>
<div style="left:771px;top:280.5px;width:9px;height:9px;background:#ffffff"></div>
<div class="t" style="left:788px;top:283.50px;font-size:13px;color:#f2f2f2;">Gap infill</div>
<div class="t" style="left:900px;top:283.50px;font-size:13px;color:#f2f2f2;">4m</div>
<div class="t" style="left:937.5px;top:283.50px;font-size:13px;color:#f2f2f2;">12.1%</div>
<div style="left:1041.5px;top:276px;width:15px;height:15px;background:#4e4e4e"></div>
<svg style="position:absolute;left:1043px;top:278px;" width="12" height="11" viewBox="0 0 12 11"><polyline points="1.5,6 4.5,9 10.5,2.5" fill="none" stroke="#00ae42" stroke-width="2.2"/></svg>
<div style="left:771px;top:299.5px;width:9px;height:9px;background:#3040a0"></div>
<div class="t" style="left:788px;top:302.50px;font-size:13px;color:#f2f2f2;">Travel</div>
<div style="left:1041.5px;top:295px;width:15px;height:15px;background:#4e4e4e"></div>
<div style="left:771px;top:318.5px;width:9px;height:9px;background:#e8e8e8"></div>
<div class="t" style="left:788px;top:321.50px;font-size:13px;color:#f2f2f2;">Seams</div>
<div style="left:1041.5px;top:314px;width:15px;height:15px;background:#4e4e4e"></div>
<div class="t" style="left:770px;top:350.00px;font-size:13px;color:#f2f2f2;transform:scaleX(1.0519);transform-origin:0 0;">Total estimation</div>
<div style="left:766px;top:361px;width:322px;height:1px;background:#dcdcdc"></div>
<div class="t" style="left:770px;top:373.00px;font-size:13px;color:#f2f2f2;">Filament:</div>
<div class="t" style="left:896px;top:373.00px;font-size:13px;color:#f2f2f2;">3.44 m</div>
<div class="t" style="left:770px;top:392.00px;font-size:13px;color:#f2f2f2;">Prepare time:</div>
<div class="t" style="left:896px;top:392.00px;font-size:13px;color:#f2f2f2;">0s</div>
<div class="t" style="left:770px;top:411.00px;font-size:13px;color:#f2f2f2;">Model printing time:</div>
<div class="t" style="left:896px;top:411.00px;font-size:13px;color:#f2f2f2;">30m</div>
<div class="t" style="left:770px;top:430.00px;font-size:13px;color:#f2f2f2;">Total:</div>
<div class="t" style="left:896px;top:430.00px;font-size:13px;color:#f2f2f2;">30m</div>
<div class="t" style="left:951.5px;top:373.00px;font-size:13px;color:#f2f2f2;">10.26 g</div>
<div style="left:1164px;top:160px;width:10px;height:590px;background:#fff;border-radius:5px"></div>
<div style="left:1165px;top:161px;width:8px;height:588px;background:#00ae42"></div>
<div style="left:1156px;top:135px;width:26px;height:26px;border-radius:13px;background:#fff"></div>
<div style="left:1157px;top:136px;width:24px;height:24px;border-radius:12px;background:#00ae42"></div>
<svg style="position:absolute;left:1160px;top:139px;" width="18" height="18" viewBox="0 0 18 18"><path d="M9,1.5 V16.5 M1.5,9 H16.5" stroke="#fff" stroke-width="1.6"/></svg>
<div style="left:1156px;top:735px;width:26px;height:26px;border-radius:13px;background:#fff"></div>
<div style="left:1157px;top:736px;width:24px;height:24px;border-radius:12px;background:#00ae42"></div>
<div style="left:1103px;top:114px;width:43px;height:34px;background:#fff;border-radius:2px"></div>
<svg style="position:absolute;left:1145px;top:140px;" width="9" height="8" viewBox="0 0 9 8"><polygon points="0,0 8,8 0,8" fill="#fff"/></svg>
<div class="t" style="left:1116px;top:123.80px;font-size:13px;color:#00ae42;transform:scaleX(0.9683);transform-origin:0 0;">150</div>
<div class="t" style="left:1108px;top:138.10px;font-size:13px;color:#00ae42;transform:scaleX(1.0452);transform-origin:0 0;">30.00</div>
<div style="left:1107px;top:748px;width:39px;height:34px;background:#fff;border-radius:2px"></div>
<svg style="position:absolute;left:1145px;top:748px;" width="9" height="8" viewBox="0 0 9 8"><polygon points="0,0 8,0 0,8" fill="#fff"/></svg>
<div class="t" style="left:1126px;top:758.50px;font-size:13px;color:#00ae42;transform:scaleX(0.9683);transform-origin:0 0;">1</div>
<div class="t" style="left:1114px;top:772.50px;font-size:13px;color:#00ae42;transform:scaleX(1.0277);transform-origin:0 0;">0.20</div>
<div style="left:593px;top:775px;width:384px;height:10px;background:#fff;border-radius:5px"></div>
<div style="left:594px;top:776px;width:382px;height:8px;background:#00ae42;border-radius:4px"></div>
<div style="left:962px;top:767px;width:26px;height:26px;border-radius:13px;background:#fff"></div>
<div style="left:963px;top:768px;width:24px;height:24px;border-radius:12px;background:#00ae42"></div>
<div style="left:997px;top:771px;width:32px;height:18px;background:#fff;border-radius:2px"></div>
<svg style="position:absolute;left:991px;top:775.0px;" width="7" height="10" viewBox="0 0 7 10"><polygon points="7,0 0,5 7,10" fill="#fff"/></svg>
<div class="t" style="left:1002px;top:779.50px;font-size:13px;color:#00ae42;transform:scaleX(0.9683);transform-origin:0 0;">426</div>
<svg style="position:absolute;left:1157px;top:788px;" width="26" height="24" viewBox="0 0 26 24"><g fill="#00ae42" stroke="#fff" stroke-width="1.1" stroke-linejoin="round"><path d="M12.7,12 L22.5,16.5 L12.7,21.3 L2.9,16.5 Z"/><path d="M12.7,7.6 L22.5,12.2 L12.7,17 L2.9,12.2 Z"/><path d="M12.7,3.2 L22.5,7.6 L12.7,12 L2.9,7.6 Z"/></g></svg>
</body></html>
